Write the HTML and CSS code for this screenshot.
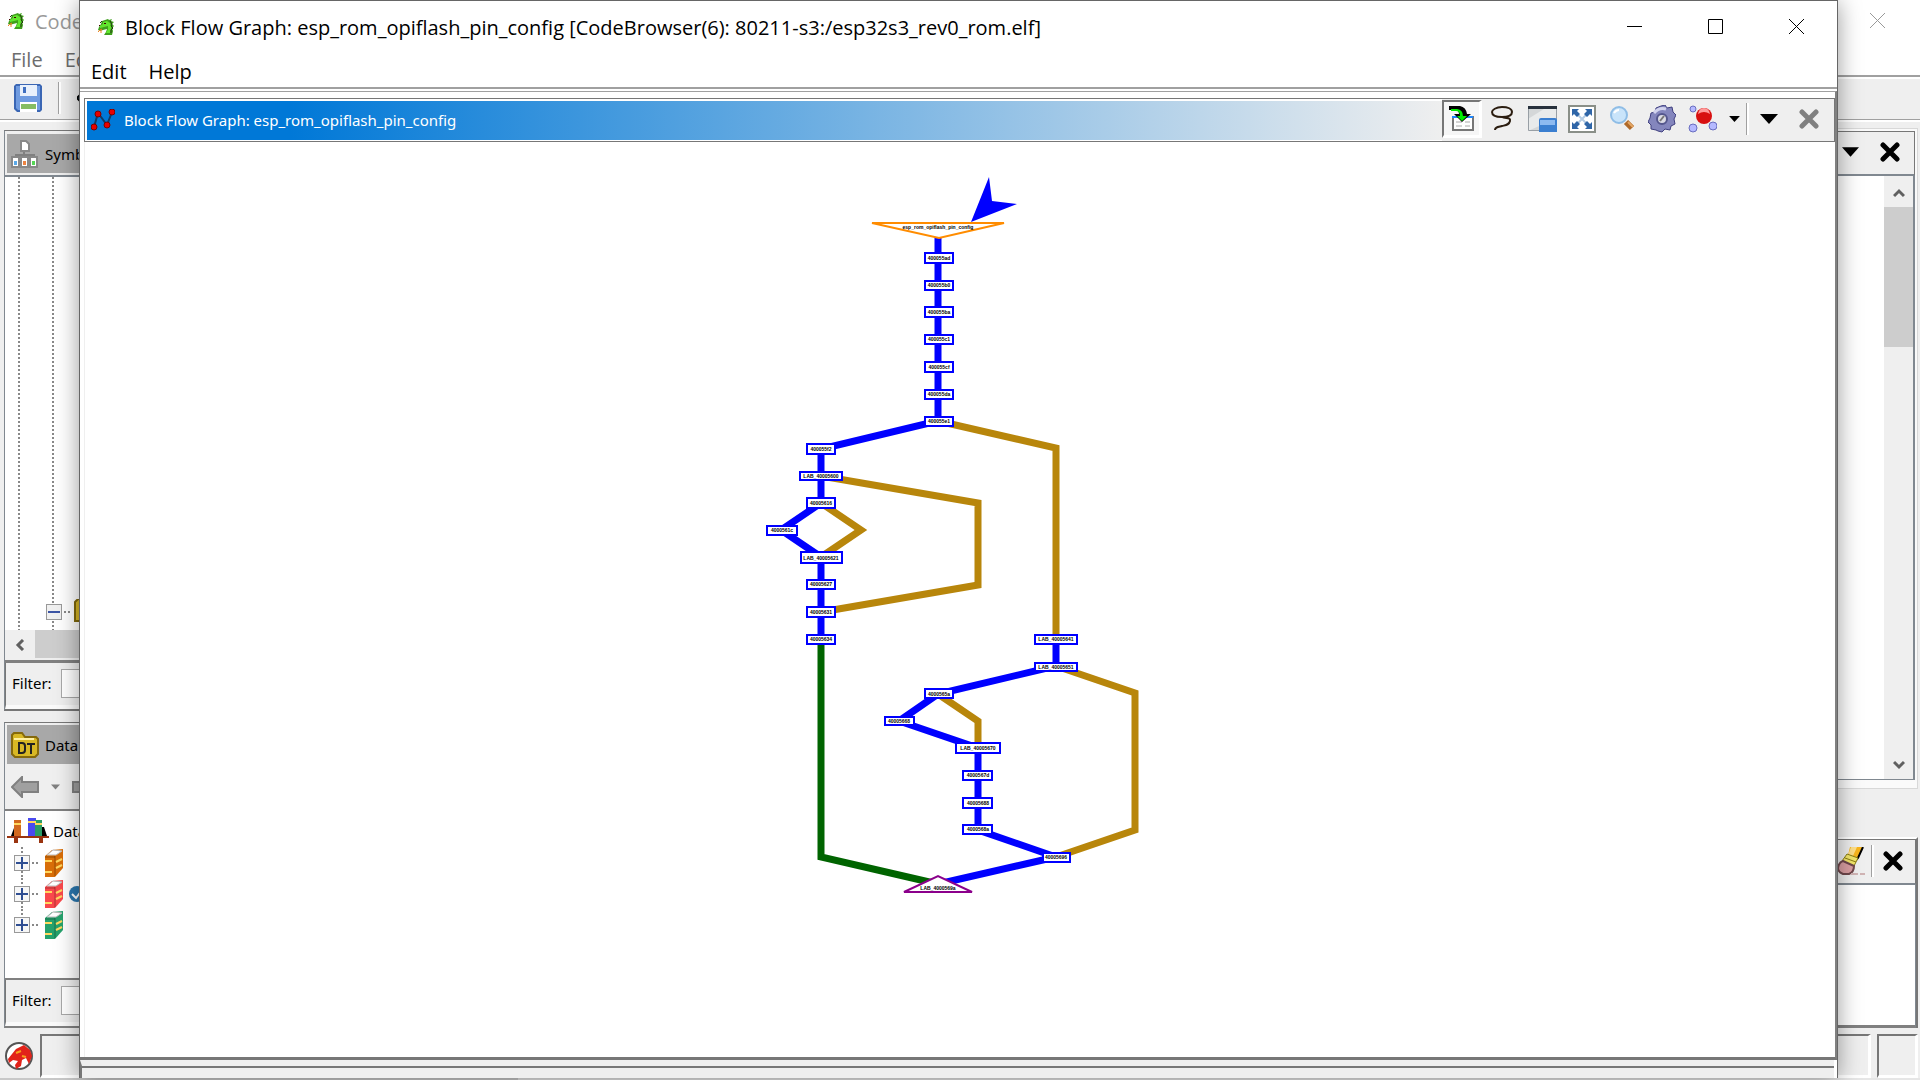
FILE: index.html
```
<!DOCTYPE html>
<html lang="en">
<head>
    <meta charset="utf-8">
    <title>Block Flow Graph</title>
    <link rel="stylesheet" href="styles.css">
</head>
<body>
    <!-- shared icons -->
    <svg class="defs" width="0" height="0" aria-hidden="true">
        <symbol id="dragon" viewBox="0 0 16 16">
            <path d="M4 2l3-1 3-1 1 1 3-1-1 2 3 1-2 2 2 2-2 2 1 3-1 4H6l2-3 1-3-4 1-3 1-2-1 1-3 2-3z" fill="#3fa01c"/>
            <path d="M5 3l4-1 3 2 1 4-1 6H8l2-4V7L6 8 2 9V7l3-2z" fill="#62e62e"/>
            <path d="M12 2l2 3-1 2 2 2-2 2v3M4 2L2 4" stroke="#243c10" fill="none"/>
            <path d="M6 4h2v1H6zM1 6h1v1H1z" fill="#400"/>
            <path d="M4 10l-2 1-2 2M3 11v3" stroke="#f58220" fill="none"/>
        </symbol>
        <symbol id="cross" viewBox="0 0 20 20">
            <path d="M3 3l14 14M17 3L3 17" stroke="currentColor" stroke-width="5" stroke-linecap="round"/>
        </symbol>
        <symbol id="down" viewBox="0 0 18 10">
            <path d="M0 0h18L9 10z" fill="currentColor"/>
        </symbol>
        <symbol id="book" viewBox="0 0 20 28">
            <path d="M1 7l7-6 11-1v19l-8 9H1z" fill="currentColor"/>
            <path d="M3 6l6-5 9 1-6 4z" fill="#fff" stroke="#bbb"/>
            <path d="M11 7v20M1 8h10" stroke="#000" stroke-opacity=".3"/>
            <path d="M1 12h7M1 23h7M12 13l6-3M12 19l6-3" stroke="#ffd75e" stroke-width="2"/>
        </symbol>
    </svg>

    <div class="back-window">
        <div class="back-title">
            <svg class="app-icon"><use href="#dragon"/></svg>
            <span>Code</span>
            <button class="back-close" aria-label="Close"><svg viewBox="0 0 16 16"><path d="M0 0l15 15M15 0L0 15" stroke="#999"/></svg></button>
        </div>
        <div class="back-menu">
            <a href="#">File</a>
            <a href="#">Ed</a>
        </div>
        <div class="back-toolbar">
            <button aria-label="Save">
                <svg width="28" height="28" viewBox="0 0 28 28">
                    <path d="M2 0h24l2 2v24l-2 2H3l-3-3V2z" fill="#3a66b4"/>
                    <path d="M2 2h24v24H4l-2-2z" fill="#6f9be0"/>
                    <path d="M6 1h17v11H6z" fill="#e8f0fb"/>
                    <path d="M9 3h3v6H9z" fill="#3f6fc0"/>
                    <path d="M6 18h17v10H6z" fill="#fff"/>
                    <path d="M7 20h15v5H7z" fill="#86bd62"/>
                </svg>
            </button>
            <span class="sep"></span>
            <button aria-label="Back">
                <svg width="16" height="16" viewBox="0 0 16 16"><path d="M0 8l6-6v4h10v4H6v4z" fill="#3f9ad0" stroke="#000" stroke-width="2"/></svg>
            </button>
        </div>

        <div class="workspace">
            <div class="dock-left">
                <div class="panel panel-symbols">
                    <div class="panel-header">
                        <svg width="28" height="28" viewBox="0 0 28 28">
                            <path d="M13 10v5M5 18v-3h18v3M13 15v4" stroke="#808080" stroke-width="2" fill="none"/>
                            <g fill="#fff" stroke="#888" stroke-width="2"><path d="M10 1h5l3 3v7h-8zM1 17h7v10H1zM10 17h7v10h-7zM19 17h7v10h-7z"/></g>
                            <path d="M3 21h3v4H3z" fill="#5aa9e8"/><path d="M12 21h3v4h-3z" fill="#ee8442"/><path d="M21 21h3v4h-3z" fill="#55d755"/>
                        </svg>
                        <span>Symb</span>
                    </div>
                    <div class="symbol-tree">
                        <div class="tree-row">
                            <span class="toggle minus"></span><span class="stub"></span>
                            <svg width="24" height="26" viewBox="0 0 24 26"><path d="M1 3l3-3h8l2 4h9v18H1z" fill="#d8b825" stroke="#80690c" stroke-width="2"/></svg>
                        </div>
                    </div>
                    <div class="h-scroll">
                        <button aria-label="Scroll left"><svg width="10" height="12" viewBox="0 0 10 12"><path d="M8 1L3 6l5 5" stroke="#606060" stroke-width="3" fill="none"/></svg></button>
                        <span class="thumb"></span>
                    </div>
                    <div class="filter">
                        <label for="symbolFilter">Filter:</label>
                        <input type="text" id="symbolFilter">
                    </div>
                </div>

                <div class="panel panel-data">
                    <div class="panel-header">
                        <svg width="28" height="26" viewBox="0 0 28 26">
                            <path d="M1 3l2-2h8l3 4h11l2 2v15l-3 3H4l-3-3z" fill="#d8b825" stroke="#85690c" stroke-width="2"/>
                            <path d="M3 7h20" stroke="#fff0a0" stroke-width="2"/>
                            <path d="M8 11v10h3q3 0 3-3v-4q0-3-3-3zM16 12h8M20 12v10" stroke="#222" stroke-width="2" fill="none"/>
                        </svg>
                        <span>Data</span>
                    </div>
                    <div class="data-toolbar">
                        <button aria-label="Previous"><svg width="28" height="22" viewBox="0 0 28 22"><path d="M1 11L11 1v5h16v10H11v5z" fill="#a0a0a0" stroke="#808080" stroke-width="2"/></svg></button>
                        <button class="small-arrow" aria-label="History"><svg width="9" height="6"><use href="#down"/></svg></button>
                        <button aria-label="Next"><svg width="28" height="22" viewBox="0 0 28 22"><path d="M27 11L17 1v5H1v10h16v5z" fill="#a0a0a0" stroke="#808080" stroke-width="2"/></svg></button>
                    </div>
                    <div class="data-tree">
                        <div class="root-row">
                            <svg width="42" height="26" viewBox="0 0 42 26">
                                <path d="M4 18l3-8h4v8zM34 18V9h3l3 9z" fill="#000"/>
                                <path d="M7 2h7v17H7z" fill="#d2691e"/><path d="M21 0h8v19h-8z" fill="#4a4af0"/><path d="M28 2h7v17h-7z" fill="#2a9d66"/>
                                <path d="M7 6h7M21 4h8M28 6h7" stroke="#ffd75e" stroke-width="2"/>
                                <path d="M0 18h42v2H0zM7 20h4v5H7zM32 20h4v5h-4z" fill="#9a3410"/>
                            </svg>
                            <span>Data</span>
                        </div>
                        <div class="tree-row"><span class="toggle"></span><span class="stub"></span><svg class="book orange"><use href="#book"/></svg></div>
                        <div class="tree-row"><span class="toggle"></span><span class="stub"></span><svg class="book red"><use href="#book"/></svg>
                            <svg width="16" height="16" viewBox="0 0 16 16"><circle cx="8" cy="8" r="8" fill="#2b78b0"/><path d="M3 8l4 4 6-8" stroke="#fff" stroke-width="2" fill="none"/></svg>
                        </div>
                        <div class="tree-row"><span class="toggle"></span><span class="stub"></span><svg class="book green"><use href="#book"/></svg></div>
                    </div>
                    <div class="filter">
                        <label for="dataFilter">Filter:</label>
                        <input type="text" id="dataFilter">
                    </div>
                </div>
            </div>

            <div class="dock-right">
                <div class="listing">
                    <div class="tools">
                        <button aria-label="Menu"><svg width="17" height="10"><use href="#down"/></svg></button>
                        <button aria-label="Close"><svg width="20" height="20"><use href="#cross"/></svg></button>
                    </div>
                    <div class="listing-body">
                        <div class="v-scroll">
                            <button aria-label="Scroll up"><svg width="12" height="10" viewBox="0 0 12 10"><path d="M1 8l5-5 5 5" stroke="#606060" stroke-width="3" fill="none"/></svg></button>
                            <span class="thumb"></span>
                            <button aria-label="Scroll down"><svg width="12" height="10" viewBox="0 0 12 10"><path d="M1 2l5 5 5-5" stroke="#606060" stroke-width="3" fill="none"/></svg></button>
                        </div>
                    </div>
                </div>
                <div class="console">
                    <div class="tools">
                        <button aria-label="Clear">
                            <svg width="28" height="28" viewBox="0 0 28 28">
                                <path d="M12 0h13l-5 11-10-3z" fill="#f8b51c"/><path d="M13 0h6l-4 9-5-1z" fill="#ffe08a"/>
                                <path d="M25 0l-5 11-2 2" stroke="#000" stroke-width="2" fill="none"/>
                                <path d="M9 7l11 4-4 8-12-5z" fill="#f5e86a" stroke="#8a7d14"/><path d="M7 11l11 4" stroke="#8a7d14"/>
                                <path d="M5 14l11 5q0 6-5 8H5q-5-2-5-6 1-6 5-7z" fill="#dca0a4" stroke="#70484c" stroke-width="2"/>
                                <path d="M13 27h7M22 27h5" stroke="#d0b4b4" stroke-width="2"/>
                            </svg>
                        </button>
                        <span class="sep"></span>
                        <button aria-label="Close"><svg width="20" height="20"><use href="#cross"/></svg></button>
                    </div>
                    <div class="console-body"></div>
                </div>
            </div>
        </div>

        <div class="back-status">
            <svg width="30" height="30" viewBox="0 0 30 30">
                <circle cx="15" cy="15" r="13" fill="#fff" stroke="#555" stroke-width="2"/>
                <path d="M4 18l8-10 8-4 6 5 2 6-3 8-3-6-4 2-1 6-5 3-1-4 3-4-5-1-4 3z" fill="#e2231a"/>
                <path d="M12 12l5-2M18 15l4 1" stroke="#f7a01c" stroke-width="2"/>
            </svg>
            <div class="inset main"></div>
            <div class="inset end"></div>
        </div>
        <div class="screen-edge"><span></span></div>
    </div>

    <div class="window">
        <div class="title-bar">
            <svg class="app-icon"><use href="#dragon"/></svg>
            <span class="title">Block Flow Graph: esp_rom_opiflash_pin_config [CodeBrowser(6): 80211-s3:/esp32s3_rev0_rom.elf]</span>
            <button aria-label="Minimize"><svg width="16" height="16"><path d="M0 7.5h15" stroke="#000"/></svg></button>
            <button aria-label="Maximize"><svg width="16" height="16"><path d="M.5.5h14v14H.5z" stroke="#000" fill="none"/></svg></button>
            <button aria-label="Close"><svg width="16" height="16"><path d="M0 0l15 15M15 0L0 15" stroke="#000"/></svg></button>
        </div>
        <div class="menu-bar">
            <a href="#">Edit</a>
            <a href="#">Help</a>
        </div>

        <div class="content">
            <div class="graph-header">
                <div class="graph-title">
                    <svg width="24" height="22" viewBox="0 0 24 22">
                        <path d="M3 18L7 4l9 12 5-13" stroke="#123a66" stroke-width="2" fill="none"/>
                        <g fill="#e80000" stroke="#7c0000"><circle cx="3" cy="18" r="3"/><circle cx="7" cy="5" r="3"/><circle cx="16" cy="16" r="3"/><circle cx="21" cy="3" r="3"/></g>
                    </svg>
                    <span>Block Flow Graph: esp_rom_opiflash_pin_config</span>
                </div>
                <div class="graph-tools">
                    <button class="pressed" aria-label="Scroll to selection">
                        <svg width="26" height="26" viewBox="0 0 26 26">
                            <path d="M4 11h20v13H4z" fill="#fff" stroke="#777" stroke-width="2"/><path d="M3 11h21" stroke="#1c86ff" stroke-width="2"/>
                            <path d="M7 16h6M7 20h6M16 16h5M16 20h5" stroke="#aaa"/>
                            <path d="M0 0h11q6 1 7 8h4l-9 8-8-8h5q0-3-3-4H0z" fill="#000"/>
                            <path d="M2 3h6q6 1 6 7h4l-5 5-5-5h3q0-5-4-5H2z" fill="#0e0"/>
                        </svg>
                    </button>
                    <button aria-label="Free-form selection">
                        <svg width="24" height="26" viewBox="0 0 24 26"><path d="M12 11C4 11 2 8 2 6s4-5 10-5 10 2 10 5-3 5-10 5c3 2 9 0 8 4s-4 4-8 5-7 1-7 4" stroke="#2b1d10" stroke-width="2" fill="none"/></svg>
                    </button>
                    <button aria-label="Satellite view">
                        <svg width="29" height="26" viewBox="0 0 29 26"><path d="M0 0h29v25H0z" fill="#d4d7d8"/><path d="M0 25V13L16 3h13v9z" fill="#e9ebeb"/><path d="M.5.5h28v24H.5z" fill="none" stroke="#989fa5"/><path d="M0 0h29v3H0z" fill="#27303c"/><path d="M11 14q0-2 2-2h14q2 0 2 2v12H11z" fill="#3b7fd0"/><path d="M12 14h15v5H12z" fill="#8dbaf0"/></svg>
                    </button>
                    <button aria-label="Fit to window">
                        <svg width="28" height="28" viewBox="0 0 28 28"><path d="M1 1h26v26H1z" fill="#fff" stroke="#8a8f88" stroke-width="2"/><path d="M8 8l12 12M20 8L8 20" stroke="#b4cce4" stroke-width="2"/><path d="M4 4h7L9 6l3 3-3 3-3-3-2 2zM24 4h-7l2 2-3 3 3 3 3-3 2 2zM4 24h7l-2-2 3-3-3-3-3 3-2-2zM24 24h-7l2-2-3-3 3-3 3 3 2-2z" fill="#2f66a8"/></svg>
                    </button>
                    <button aria-label="Zoom">
                        <svg width="26" height="26" viewBox="0 0 26 26"><path d="M17 16l6 6" stroke="#b06a2a" stroke-width="6"/><path d="M19 16l5 5" stroke="#e6a866" stroke-width="2"/><circle cx="10" cy="9" r="8" fill="#c9e4fa" stroke="#8fbde6" stroke-width="2"/><path d="M5 7q2-3 5-3" stroke="#fff" stroke-width="2" fill="none"/></svg>
                    </button>
                    <button aria-label="Settings">
                        <svg width="28" height="28" viewBox="0 0 28 28"><path d="M13 1l4-1 2 3 5-1 1 5 3 3-2 4 1 5-4 2-1 4-5-1-3 3-4-1-2-1-5-1v-4l-3-3 2-4 1-5 4-1 1-4z" fill="#8486bd" stroke="#404080"/><path d="M6 8q5-6 12-4" stroke="#d2d3ee" stroke-width="3" fill="none"/><ellipse cx="14" cy="14" rx="5" ry="5" fill="#dcdce6" stroke="#55578d" stroke-width="2"/><path d="M12 16l4-5" stroke="#777" stroke-width="2"/></svg>
                    </button>
                    <button aria-label="Layout">
                        <svg width="29" height="28" viewBox="0 0 29 28"><g fill="#b5b9ff" stroke="#6a6ec0"><circle cx="5" cy="4" r="3"/><circle cx="5" cy="23" r="4"/><circle cx="25" cy="21" r="4"/></g><circle cx="16" cy="11" r="8" fill="#d81010"/><path d="M10 9q6-4 12 0-1-6-6-6t-6 6z" fill="#ff9a9a"/></svg>
                    </button>
                    <button class="drop" aria-label="Layout options"><svg width="11" height="6"><use href="#down"/></svg></button>
                    <span class="sep"></span>
                    <button aria-label="Menu"><svg width="18" height="10"><use href="#down"/></svg></button>
                    <button class="close" aria-label="Close"><svg width="20" height="20"><use href="#cross"/></svg></button>
                </div>
            </div>

            <svg class="graph" viewBox="85 142 1750 915">
                <g class="edges fall">
                    <path d="M938 236V421L821 449V503M821 557V639"/>
                    <path d="M821 503L781 530L821 557"/>
                    <path d="M1056 639V666L938 694L899 721L978 748V830L1056 857L938 884"/>
                </g>
                <g class="edges jump">
                    <path d="M938 421L1056 448V636"/>
                    <path d="M821 476L978 503V585L821 612"/>
                    <path d="M821 503L861 530L821 557"/>
                    <path d="M938 694L978 721V748"/>
                    <path d="M1056 666L1135 693V830L1056 857"/>
                </g>
                <g class="edges loop">
                    <path d="M821 639V857L938 884"/>
                </g>
                <path class="entry-arrow" d="M971 222L989 177L992 201L1017 204z"/>
                <path class="entry" d="M872 223H1004L939 238z"/>
                <path class="exit" d="M904 892H972L938 876z"/>

                <g class="nodes">
                    <rect x="925" y="253" width="28" height="10"/>
                    <rect x="925" y="281" width="28" height="9"/>
                    <rect x="925" y="307" width="28" height="10"/>
                    <rect x="925" y="335" width="28" height="9"/>
                    <rect x="925" y="362" width="28" height="10"/>
                    <rect x="925" y="390" width="28" height="9"/>
                    <rect x="925" y="417" width="28" height="9"/>
                    <rect x="807" y="444" width="28" height="10"/>
                    <rect x="800" y="472" width="42" height="8"/>
                    <rect x="807" y="498" width="28" height="10"/>
                    <rect x="767" y="526" width="30" height="9"/>
                    <rect x="801" y="552" width="41" height="11"/>
                    <rect x="807" y="580" width="28" height="9"/>
                    <rect x="807" y="607" width="28" height="10"/>
                    <rect x="807" y="635" width="28" height="9"/>
                    <rect x="1035" y="635" width="42" height="9"/>
                    <rect x="1035" y="663" width="42" height="8"/>
                    <rect x="925" y="689" width="28" height="9"/>
                    <rect x="885" y="717" width="29" height="8"/>
                    <rect x="956" y="743" width="44" height="10"/>
                    <rect x="963" y="771" width="29" height="9"/>
                    <rect x="963" y="798" width="29" height="10"/>
                    <rect x="963" y="825" width="29" height="9"/>
                    <rect x="1043" y="853" width="27" height="9"/>
                </g>
                <g class="labels">
                    <text x="938" y="229">esp_rom_opiflash_pin_config</text>
                    <text x="939" y="260">400055ad</text>
                    <text x="939" y="287">400055b0</text>
                    <text x="939" y="314">400055ba</text>
                    <text x="939" y="341">400055c1</text>
                    <text x="939" y="369">400055cf</text>
                    <text x="939" y="396">400055da</text>
                    <text x="939" y="423">400055e1</text>
                    <text x="821" y="451">400055f2</text>
                    <text x="821" y="478">LAB_40005600</text>
                    <text x="821" y="505">40005616</text>
                    <text x="782" y="532">4000561c</text>
                    <text x="821" y="560">LAB_40005621</text>
                    <text x="821" y="586">40005627</text>
                    <text x="821" y="614">40005631</text>
                    <text x="821" y="641">40005634</text>
                    <text x="1056" y="641">LAB_40005641</text>
                    <text x="1056" y="669">LAB_40005651</text>
                    <text x="939" y="696">4000565a</text>
                    <text x="899" y="723">40005668</text>
                    <text x="978" y="750">LAB_40005670</text>
                    <text x="978" y="777">4000567d</text>
                    <text x="978" y="805">40005688</text>
                    <text x="978" y="831">4000568a</text>
                    <text x="1056" y="859">40005696</text>
                    <text x="938" y="890">LAB_4000569a</text>
                </g>
            </svg>
        </div>
        <div class="status-bar"></div>
    </div>
</body>
</html>
```

FILE: styles.css
```
* {
    box-sizing: border-box;
}
body {
    margin: 0;
    height: 100vh;
    overflow: hidden;
    background-color: #efefef;
    font-family: "Open Sans", "Segoe UI", sans-serif;
    font-size: 20px;
    color: #000;
}
a {
    color: inherit;
    text-decoration: none;
}
button {
    display: flex;
    align-items: center;
    justify-content: center;
    padding: 0;
    border: none;
    background: none;
    color: #000;
}
svg {
    display: block;
    flex: none;
}
.defs {
    position: absolute;
}
.app-icon {
    width: 16px;
    height: 16px;
}
.sep {
    width: 3px;
    height: 32px;
    border-left: 1px solid #a0a0a0;
    border-right: 2px solid #fff;
}

/* window behind */
.back-window {
    height: 100vh;
    display: flex;
    flex-direction: column;
}
.back-title {
    height: 42px;
    display: flex;
    align-items: center;
    gap: 11px;
    padding-left: 8px;
    background-color: #fff;
    color: #999;
}
.back-close {
    margin-left: auto;
    width: 85px;
}
.back-close svg {
    width: 16px;
    height: 16px;
}
.back-menu {
    height: 37px;
    display: flex;
    align-items: center;
    gap: 22px;
    padding-left: 11px;
    background-color: #fff;
    border-bottom: 2px solid #fff;
    box-shadow: inset 0 -2px 0 #a0a0a0;
    color: #6d6d6d;
}
.back-toolbar {
    height: 43px;
    display: flex;
    align-items: center;
    gap: 16px;
    padding: 0 0 4px 14px;
    border-bottom: 2px solid #fff;
    box-shadow: inset 0 -1px 0 #a0a0a0;
}
.workspace {
    flex: 1;
    min-height: 0;
    display: flex;
    justify-content: space-between;
    padding-top: 6px;
    font-family: "Noto Sans", Tahoma, sans-serif;
    font-size: 15px;
}
.dock-left,
.dock-right {
    width: 12%;
    display: flex;
    flex-direction: column;
}
.panel {
    margin-left: 4px;
    border-left: 1px solid #808890;
    border-top: 1px solid #777;
    display: flex;
    flex-direction: column;
}
.panel-symbols {
    flex: 1;
    margin-top: 2px;
    border-bottom: 2px solid #777;
}
.panel-data {
    margin-top: 11px;
    border-bottom: 2px solid #808080;
}
.panel-header {
    height: 44px;
    display: flex;
    align-items: center;
    gap: 6px;
    padding-left: 4px;
    background-color: #a8a8a8;
    border: 2px solid #efefef;
    border-top-width: 3px;
    border-right: none;
    box-shadow: 0 2px 0 #808890;
}
.panel-data .panel-header {
    height: 41px;
    border-bottom: none;
    border-top-width: 2px;
    box-shadow: none;
}
.symbol-tree {
    flex: 1;
    display: flex;
    align-items: flex-end;
    margin-top: 2px;
    padding: 0 0 3px 41px;
    background-color: #fff;
    background-image: repeating-linear-gradient(#888 0 2px, transparent 2px 4px), repeating-linear-gradient(#888 0 2px, transparent 2px 4px);
    background-size: 2px 100%;
    background-position: 13px 0, 47px 0;
    background-repeat: no-repeat;
}
.tree-row {
    height: 31px;
    display: flex;
    align-items: center;
}
.toggle {
    width: 16px;
    height: 16px;
    border: 1px solid #999;
    background: linear-gradient(#2f4e92, #2f4e92) center / 12px 2px no-repeat, linear-gradient(#2f4e92, #2f4e92) center / 2px 12px no-repeat, #f6f6f6;
}
.toggle.minus {
    background: linear-gradient(#3c55a5, #3c55a5) center / 12px 2px no-repeat, #f0f0f0;
}
.stub {
    width: 6px;
    margin: 0 4px 0 2px;
    border-top: 2px dotted #888;
}
.h-scroll {
    display: flex;
    height: 33px;
    border-bottom: 3px solid #808080;
    background-color: #efefef;
}
.h-scroll button {
    width: 30px;
}
.h-scroll .thumb {
    flex: 1;
    margin-bottom: 2px;
    background-color: #cdcdcd;
}
.filter {
    height: 46px;
    display: flex;
    align-items: center;
    gap: 9px;
    padding: 0 0 2px 6px;
    border-left: 1px solid #777;
    border-bottom: 4px solid #fafafa;
}
.filter input {
    width: 160px;
    height: 29px;
    border: 1px solid #a8a8a8;
    background-color: #fff;
}
.data-toolbar {
    height: 45px;
    display: flex;
    align-items: center;
    padding-left: 6px;
    color: #808080;
}
.small-arrow {
    width: 33px;
    color: #808080;
}
.data-tree {
    height: 171px;
    padding: 4px 0 0 2px;
    background-color: #fff;
    border: 2px solid #808080;
    border-width: 2px 0;
}
.root-row {
    height: 32px;
    display: flex;
    align-items: center;
    gap: 4px;
}
.data-tree .tree-row {
    margin-left: 7px;
    background: repeating-linear-gradient(#888 0 2px, transparent 2px 4px) 7px 0 / 2px 100% no-repeat;
}
.data-tree .tree-row:last-child {
    background-size: 2px 50%;
}
.data-tree .stub {
    margin-right: 6px;
}
.book {
    width: 20px;
    height: 28px;
    margin-right: 5px;
}
.orange {
    color: #d86e08;
}
.red {
    color: #f9484c;
}
.green {
    color: #25a26c;
}
.listing {
    flex: 1;
    display: flex;
    flex-direction: column;
    margin-right: 2px;
    padding: 2px 2px 8px 0;
    border: 1px solid #d8d8d8;
    border-left: none;
    background-color: #fafafa;
}
.tools {
    height: 45px;
    display: flex;
    align-items: center;
    justify-content: flex-end;
    padding: 0 4px 2px 0;
    background-color: #efefef;
    border: 1px solid #777;
    border-bottom: 2px solid #808890;
}
.listing .tools button {
    width: 40px;
}
.listing-body {
    flex: 1;
    display: flex;
    justify-content: flex-end;
    background-color: #fff;
    border-right: 2px solid #808890;
    border-bottom: 1px solid #808890;
}
.v-scroll {
    width: 29px;
    display: flex;
    flex-direction: column;
    background-color: #efefef;
}
.v-scroll button {
    height: 31px;
    padding-top: 2px;
}
.v-scroll .thumb {
    height: 140px;
    margin-bottom: auto;
    background-color: #cdcdcd;
}
.console {
    margin: 48px 2px 0 0;
    border-top: 2px solid #fff;
    border-right: 2px solid #777;
}
.console .tools {
    height: 46px;
    gap: 1px;
}
.console .tools button {
    width: 36px;
}
.console-body {
    height: 143px;
    background-color: #fff;
    border-right: 1px solid #808890;
    border-bottom: 3px solid #808080;
}
.back-status {
    height: 50px;
    display: flex;
    align-items: center;
    gap: 6px;
    padding: 6px 0 0 4px;
}
.inset {
    height: 44px;
    border: 2px solid #777;
    border-right: 3px solid #fff;
    border-bottom: 3px solid #fff;
}
.inset.main {
    flex: 1;
}
.inset.end {
    width: 41px;
    margin-right: 2px;
}
.screen-edge {
    height: 2px;
    background-color: #e6e6e6;
}
.screen-edge span {
    display: block;
    width: 27%;
    height: 2px;
    background-color: #c8c8c8;
}

/* graph window, floats over the one behind */
.window {
    position: absolute;
    top: 0;
    left: 79px;
    right: 82px;
    bottom: 2px;
    display: flex;
    flex-direction: column;
    background-color: #fff;
    border: 1px solid #666;
    border-bottom: none;
    box-shadow: 0 2px 22px rgba(0,0,0,0.4);
}
.title-bar {
    height: 52px;
    display: flex;
    align-items: center;
    padding-left: 18px;
}
.title-bar .title {
    flex: 1;
    margin-left: 11px;
    white-space: nowrap;
}
.title-bar button {
    width: 81px;
}
.menu-bar {
    height: 36px;
    display: flex;
    align-items: center;
    gap: 22px;
    padding: 2px 0 0 11px;
    border-bottom: 2px solid #a0a0a0;
}
.content {
    flex: 1;
    min-height: 0;
    display: flex;
    flex-direction: column;
    margin-top: 2px;
    padding: 6px 0 0 4px;
    border-top: 1px solid #a0a0a0;
    border-right: 2px solid #808080;
    border-bottom: 3px solid #777;
}
.graph-header {
    height: 44px;
    display: flex;
    border: 1px solid #777;
    font-family: "Noto Sans", Tahoma, sans-serif;
    font-size: 15px;
}
.graph-title {
    flex: 1;
    display: flex;
    align-items: center;
    gap: 9px;
    margin: 2px 0 1px 2px;
    padding: 0 0 2px 4px;
    background: linear-gradient(to right, #0078d7 15%, #efefef);
    color: #fff;
}
.graph-tools {
    display: flex;
    align-items: center;
    padding: 0 5px 2px 0;
    background-color: #efefef;
}
.graph-tools button {
    width: 40px;
    height: 38px;
}
.graph-tools .pressed {
    border: 2px solid #777;
    border-right: 3px solid #fff;
    border-bottom: 3px solid #fff;
    background-color: #f6f6f6;
}
.graph-tools .drop {
    width: 24px;
}
.graph-tools .close {
    color: #808080;
}
.graph {
    flex: 1;
    width: 100%;
    min-height: 0;
    border-left: 1px solid #efefef;
}
.edges {
    fill: none;
    stroke-width: 7;
}
.fall {
    stroke: #0000ff;
}
.jump {
    stroke: #b8860b;
}
.loop {
    stroke: #006400;
}
.entry-arrow {
    fill: #0000ff;
}
.entry {
    fill: #fff;
    stroke: #ff8c00;
    stroke-width: 2;
}
.exit {
    fill: #fff;
    stroke: #8b008b;
    stroke-width: 2;
}
.nodes rect {
    fill: #fff;
    stroke: #0000ff;
    stroke-width: 2;
}
.labels text {
    font-family: "Liberation Sans", Arial, sans-serif;
    font-size: 5px;
    font-weight: bold;
    text-anchor: middle;
}
.status-bar {
    height: 18px;
    margin-right: 3px;
    border-top: 6px solid #efefef;
    border-left: 2px solid #777;
    background-color: #efefef;
    box-shadow: inset 0 2px 0 #777;
}
```
